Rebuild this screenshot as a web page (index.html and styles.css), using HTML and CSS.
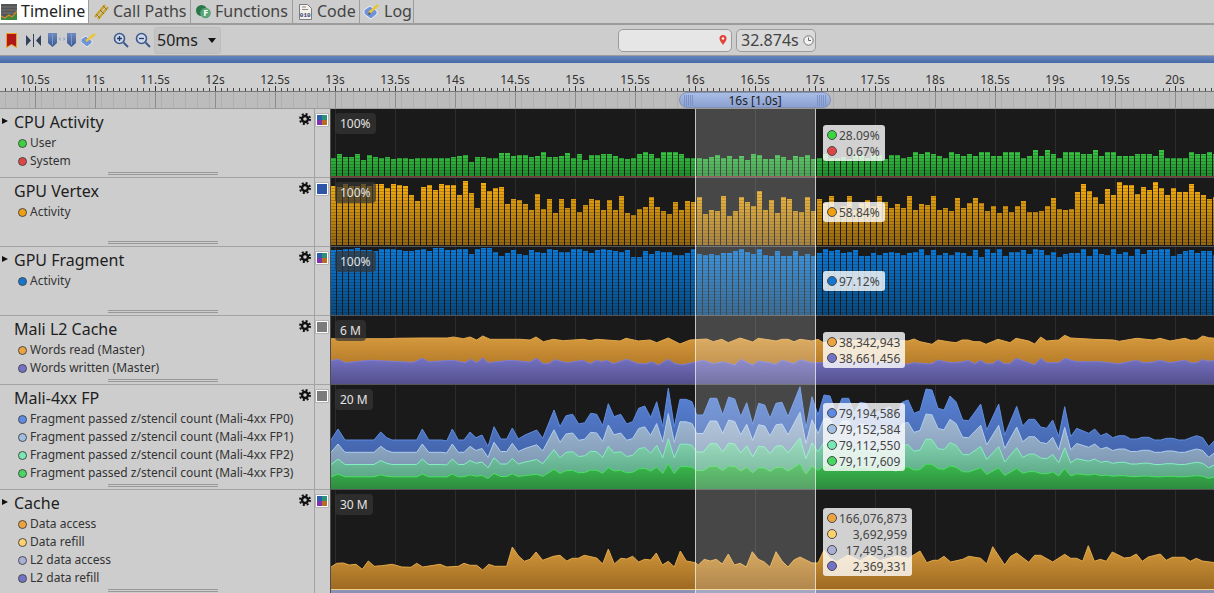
FILE: index.html
```html
<!DOCTYPE html>
<html lang="en">
<head>
<meta charset="utf-8">
<title>Timeline</title>
<link rel="stylesheet" href="styles.css">
</head>
<body>
<svg class="defs" width="0" height="0" aria-hidden="true">
  <symbol id="gear" viewBox="0 0 12 12">
    <circle cx="6" cy="6" r="3" fill="none" stroke="#111" stroke-width="2.4"/>
    <circle cx="6" cy="6" r="5" fill="none" stroke="#111" stroke-width="2" stroke-dasharray="2 1.93"/>
  </symbol>
  <linearGradient id="shield" x1="0" y1="0" x2="0" y2="1"><stop offset="0" stop-color="#6f8bc0"/><stop offset="1" stop-color="#38558f"/></linearGradient>
</svg>

<nav class="tabs">
  <div class="tab active">
    <svg class="ico" width="16" height="16" viewBox="0 0 16 16"><rect width="16" height="16" fill="#555"/><path d="M0 3h16M0 6h16M0 9h16" stroke="#777"/><path d="M0 16V11l4 2 4-3 3 2 5-5v9z" fill="#3d8a3a"/><path d="M0 12l4 2 4-3 3 2 5-6" fill="none" stroke="#d9822b" stroke-width="1.3"/></svg>
    <span>Timeline</span>
  </div>
  <div class="tab">
    <svg class="ico" width="17" height="17" viewBox="0 0 17 17"><path d="M2 14L12 2M5 16L15 4" stroke="#c9a22f" stroke-width="2.4" fill="none"/><path d="M3 11l4 4M7 7l4 4M10 3l4 4" stroke="#8f7420" fill="none"/></svg>
    <span>Call Paths</span>
  </div>
  <div class="tab tab-fn">
    <svg class="ico" width="15" height="15" viewBox="0 0 15 15"><circle cx="5.500" cy="6.500" r="5.500" fill="#2a7748"/><circle cx="9.500" cy="9" r="5.300" fill="#5aa377"/><text class="f-letter" x="7.200" y="12.400">F</text></svg>
    <span>Functions</span>
  </div>
  <div class="tab tab-code">
    <svg class="ico" width="15" height="16" viewBox="0 0 15 16"><path d="M1.500.5h8l4 4v11h-12z" fill="#f4f1e6" stroke="#7a7a88"/><path d="M4 3h4M4 5.500h6" stroke="#8d8d99"/><text class="bin" x="1.800" y="13">010</text></svg>
    <span>Code</span>
  </div>
  <div class="tab tab-log">
    <svg class="ico" width="17" height="16" viewBox="0 0 17 16"><path d="M1 6l6-4 7 5v3l-6 5-7-5z" fill="#6f93d6" stroke="#fff" stroke-width=".8"/><path d="M6 9l9-8" stroke="#e9c53a" stroke-width="2.600"/><path d="M5 11l1-3 2 2z" fill="#555"/></svg>
    <span>Log</span>
  </div>
</nav>

<div class="toolbar">
  <div class="tools">
    <svg class="t-book" width="11" height="15" viewBox="0 0 11 15"><path d="M.5.5h10v14l-5-3-5 3z" fill="#b01818" stroke="#f0a020"/></svg>
    <svg class="t-mirror" width="15" height="13" viewBox="0 0 15 13"><path d="M0 1l5 5.500-5 5.500zM15 1l-5 5.500 5 5.500z" fill="#33415e"/><path d="M7.500 0v13" stroke="#33415e"/></svg>
    <svg class="t-shields" width="28" height="14" viewBox="0 0 28 14"><path d="M0 0h9v10l-4.500 4-4.500-4zM19 0h9v10l-4.500 4-4.500-4z" fill="url(#shield)"/><path d="M4.500 1v11M23.500 1v11" stroke="#8ea4d0" stroke-width=".8"/><path d="M10.500 6l2-2v4zM17.500 6l-2-2v4z" fill="#8ea4c8"/></svg>
    <svg class="t-brush" width="16" height="15" viewBox="0 0 16 15"><path d="M0 6l5-3 6 5v2l-5 4-6-5z" fill="#6f93d6" stroke="#fff" stroke-width=".7"/><path d="M5 8l9-7" stroke="#e9c53a" stroke-width="2.400"/></svg>
    <svg class="t-zoom-in" width="16" height="16" viewBox="0 0 16 16"><circle cx="6.500" cy="6.500" r="5" fill="#cfd8e8" stroke="#3c5a8c" stroke-width="1.600"/><path d="M10.500 10.500l4.500 4.500" stroke="#3c5a8c" stroke-width="2"/><path d="M4 6.500h5M6.500 4v5" stroke="#223a66" stroke-width="1.300"/></svg>
    <svg class="t-zoom-out" width="16" height="16" viewBox="0 0 16 16"><circle cx="6.500" cy="6.500" r="5" fill="#cfd8e8" stroke="#3c5a8c" stroke-width="1.600"/><path d="M10.500 10.500l4.500 4.500" stroke="#3c5a8c" stroke-width="2"/><path d="M4 6.500h5" stroke="#223a66" stroke-width="1.300"/></svg>
    <div class="combo"><span>50ms</span><i class="combo-arrow"></i></div>
  </div>
  <div class="field search">
    <svg width="8" height="10" viewBox="0 0 8 10"><path d="M4 10C2 7 .5 5.500.5 3.500a3.500 3.500 0 0 1 7 0C7.500 5.500 6 7 4 10z" fill="#e0453a"/><circle cx="4" cy="3.500" r="1.200" fill="#fff"/></svg>
  </div>
  <div class="field clock">
    <span>32.874s</span>
    <svg width="11" height="11" viewBox="0 0 11 11"><circle cx="5.500" cy="5.500" r="4.700" fill="#f2f2f2" stroke="#777"/><path d="M5.500 2.500v3h2.500" fill="none" stroke="#666"/></svg>
  </div>
</div>

<div class="strip"></div>

<div class="ruler">
  <div class="labels">
    <span>10.5s</span><span>11s</span><span>11.5s</span><span>12s</span><span>12.5s</span><span>13s</span><span>13.5s</span><span>14s</span><span>14.5s</span><span>15s</span><span>15.5s</span><span>16s</span><span>16.5s</span><span>17s</span><span>17.5s</span><span>18s</span><span>18.5s</span><span>19s</span><span>19.5s</span><span>20s</span>
  </div>
  <div class="ticks"></div>
  <div class="band"><div class="pill">16s [1.0s]</div></div>
</div>

<main class="tracks">
  <section class="row">
    <div class="info">
      <div class="head"><i class="arrow"></i><h2>CPU Activity</h2><svg class="gear" width="12" height="12"><use href="#gear"/></svg></div>
      <ul class="legend"><li><i class="dot c-green"></i>User</li><li><i class="dot c-red"></i>System</li></ul>
      <div class="grip"></div>
    </div>
    <div class="ctl"><i class="swatch multi"></i></div>
    <div class="plot" data-chart="cpu">
      <div class="scale">100%</div>
      <div class="tip tip-16"><i class="dot c-green"></i><span>28.09%</span><i class="dot c-red"></i><span>0.67%</span></div>
    </div>
  </section>

  <section class="row">
    <div class="info">
      <div class="head no-arrow"><h2>GPU Vertex</h2><svg class="gear" width="12" height="12"><use href="#gear"/></svg></div>
      <ul class="legend"><li><i class="dot c-amber"></i>Activity</li></ul>
      <div class="grip"></div>
    </div>
    <div class="ctl"><i class="swatch blue"></i></div>
    <div class="plot" data-chart="vertex">
      <div class="scale">100%</div>
      <div class="tip tip-24"><i class="dot c-amber"></i><span>58.84%</span></div>
    </div>
  </section>

  <section class="row">
    <div class="info">
      <div class="head"><i class="arrow"></i><h2>GPU Fragment</h2><svg class="gear" width="12" height="12"><use href="#gear"/></svg></div>
      <ul class="legend"><li><i class="dot c-blue"></i>Activity</li></ul>
      <div class="grip"></div>
    </div>
    <div class="ctl"><i class="swatch multi"></i></div>
    <div class="plot" data-chart="fragment">
      <div class="scale">100%</div>
      <div class="tip tip-24"><i class="dot c-blue"></i><span>97.12%</span></div>
    </div>
  </section>

  <section class="row">
    <div class="info">
      <div class="head no-arrow"><h2>Mali L2 Cache</h2><svg class="gear" width="12" height="12"><use href="#gear"/></svg></div>
      <ul class="legend"><li><i class="dot c-orange"></i>Words read (Master)</li><li><i class="dot c-violet"></i>Words written (Master)</li></ul>
      <div class="grip"></div>
    </div>
    <div class="ctl"><i class="swatch grey"></i></div>
    <div class="plot" data-chart="l2">
      <div class="scale">6 M</div>
      <div class="tip tip-16"><i class="dot c-orange"></i><span>38,342,943</span><i class="dot c-violet"></i><span>38,661,456</span></div>
    </div>
  </section>

  <section class="row tall">
    <div class="info">
      <div class="head no-arrow"><h2>Mali-4xx FP</h2><svg class="gear" width="12" height="12"><use href="#gear"/></svg></div>
      <ul class="legend">
        <li><i class="dot c-fp0"></i>Fragment passed z/stencil count (Mali-4xx FP0)</li>
        <li><i class="dot c-fp1"></i>Fragment passed z/stencil count (Mali-4xx FP1)</li>
        <li><i class="dot c-fp2"></i>Fragment passed z/stencil count (Mali-4xx FP2)</li>
        <li><i class="dot c-fp3"></i>Fragment passed z/stencil count (Mali-4xx FP3)</li>
      </ul>
      <div class="grip"></div>
    </div>
    <div class="ctl"><i class="swatch grey"></i></div>
    <div class="plot" data-chart="fp">
      <div class="scale">20 M</div>
      <div class="tip tip-18">
        <i class="dot c-fp0"></i><span>79,194,586</span><i class="dot c-fp1"></i><span>79,152,584</span>
        <i class="dot c-fp2"></i><span>79,112,550</span><i class="dot c-fp3"></i><span>79,117,609</span>
      </div>
    </div>
  </section>

  <section class="row tall">
    <div class="info">
      <div class="head"><i class="arrow"></i><h2>Cache</h2><svg class="gear" width="12" height="12"><use href="#gear"/></svg></div>
      <ul class="legend">
        <li><i class="dot c-orange"></i>Data access</li>
        <li><i class="dot c-yellow"></i>Data refill</li>
        <li><i class="dot c-lav"></i>L2 data access</li>
        <li><i class="dot c-violet"></i>L2 data refill</li>
      </ul>
      <div class="grip"></div>
    </div>
    <div class="ctl"><i class="swatch multi"></i></div>
    <div class="plot" data-chart="cache">
      <div class="scale">30 M</div>
      <div class="tip tip-18">
        <i class="dot c-orange"></i><span>166,076,873</span><i class="dot c-yellow"></i><span>3,692,959</span>
        <i class="dot c-lav"></i><span>17,495,318</span><i class="dot c-violet"></i><span>2,369,331</span>
      </div>
    </div>
  </section>

  <div class="selection"></div>
</main>
<script src="charts.js"></script>
</body>
</html>
```
FILE: styles.css
```css
* { box-sizing: border-box; }
html, body { margin: 0; height: 593px; overflow: hidden; }
body { background: #cdcdcd; font-family: "Noto Sans", sans-serif; color: #2a2a2a; width: 1214px; }
.defs { position: absolute; }

.tabs { display: flex; height: 25px; border-bottom: 2px solid #9c9c9c; font-size: 16px; line-height: 23px; color: #444; }
.tab { display: flex; align-items: center; gap: 3px; padding: 0 3px 0 4px; width: 102px; border-right: 1px solid #9c9c9c; }
.tab .ico { flex: none; }
.tab.active { width: 89px; background: #fff; color: #222; padding-left: 1px; gap: 4px; }
.tab-fn { padding-left: 5px; gap: 4px; }
.tab-code { width: 67px; padding-left: 5px; gap: 4px; }
.tab-log { width: 54px; padding-left: 3px; gap: 4px; }
.f-letter { font-size: 9px; font-weight: 700; fill: #fff; font-family: "Noto Sans", sans-serif; }
.bin { font-size: 6px; fill: #22407a; font-family: "Liberation Mono", monospace; font-weight: 700; }

.toolbar { display: flex; align-items: center; height: 31px; border-bottom: 1px solid #9c9c9c; }
.tools { display: flex; align-items: center; width: 618px; flex: none; padding-left: 6px; }
.t-mirror { margin-left: 9px; }
.t-shields { margin-left: 7px; }
.t-brush { margin-left: 5px; }
.t-zoom-in { margin-left: 16px; }
.t-zoom-out { margin-left: 6px; }
.combo { display: flex; align-items: center; justify-content: space-between; width: 67px; height: 27px; margin-left: 3px; padding: 0 2px; background: #c4c4c4; border: 1px solid #bdbdbd; border-radius: 3px; font-size: 16px; color: #222; }
.combo-arrow { width: 0; height: 0; border: 4.500px solid transparent; border-top: 5px solid #111; border-bottom: 0; margin-right: 2px; }
.field { display: flex; align-items: center; height: 23px; background: #e6e6e6; border: 1px solid #9b9b9b; border-radius: 5px; font-size: 16px; color: #444; }
.search { width: 114px; justify-content: flex-end; padding-right: 4px; }
.clock { width: 80px; margin-left: 4px; padding-left: 4px; gap: 4px; background: #dadada; }

.strip { height: 7px; background: linear-gradient(#6685bd, #466aa6); }

.ruler { height: 46px; border-bottom: 1px solid #9c9c9c; background: #cfcfcf; }
.labels { display: flex; height: 23px; padding: 8px 0 0 5px; font-size: 12px; line-height: 17px; color: #333; }
.labels span { flex: none; width: 60px; text-align: center; }
.ticks { height: 6px; border-bottom: 1px solid #777;
  background:
    linear-gradient(90deg, #333 1px, transparent 1px) 35px 0 / 60px 100% repeat-x,
    linear-gradient(90deg, #444 1px, transparent 1px) 5px 100% / 6px 3px repeat-x; }
.band { position: relative; height: 16px;
  background:
    linear-gradient(90deg, #8c8c8c 1px, transparent 1px) 35px 0 / 60px 100% repeat-x,
    linear-gradient(90deg, #b0b0b0 1px, transparent 1px) 5px 0 / 12px 100% repeat-x,
    #bcbcbc; }
.pill { position: absolute; left: 679px; top: 0; width: 152px; height: 16px; border-radius: 8px; border: 1px solid #8291b5; font-size: 12px; line-height: 15px; text-align: center; color: #222;
  background:
    repeating-linear-gradient(90deg, #7c92c4 0 1px, transparent 1px 2px) 4px 2px / 9px 11px no-repeat,
    repeating-linear-gradient(90deg, #7c92c4 0 1px, transparent 1px 2px) 137px 2px / 9px 11px no-repeat,
    linear-gradient(#a9bde6, #8aa0d0); }

.tracks { position: relative; }
.row { display: flex; height: 69px; }
.row.tall { height: 105px; }
.info { display: flex; flex-direction: column; width: 315px; flex: none; padding: 3px 3px 2px 0; border-right: 1px solid #a3a3a3; border-bottom: 1px solid #a3a3a3; }
.head { display: flex; align-items: flex-start; height: 20px; }
.head.no-arrow { padding-left: 14px; }
.arrow { flex: none; width: 14px; height: 20px; position: relative; }
.arrow::before { content: ""; position: absolute; left: 2px; top: 6px; border-left: 6px solid #111; border-top: 3.500px solid transparent; border-bottom: 3.500px solid transparent; }
h2 { flex: 1; margin: 0; font-size: 16px; font-weight: 400; line-height: 20px; color: #1e1e1e; }
.gear { flex: none; margin-top: 1px; }
.legend { list-style: none; margin: 2px 0 0; padding: 0 0 0 18px; font-size: 12px; line-height: 18px; color: #333; }
.legend li { display: flex; align-items: center; gap: 3px; white-space: nowrap; height: 18px; }
.dot { flex: none; width: 9px; height: 9px; border-radius: 50%; border: 1px solid #4a4a4a; }
.grip { flex: none; width: 110px; height: 3px; margin: auto 0 0 108px; border-top: 1px solid #999; border-bottom: 1px solid #999; }

.ctl { flex: none; width: 15px; padding: 5px 0 0 1px; border-bottom: 1px solid #a3a3a3; }
.swatch { display: block; width: 12px; height: 12px; border: 1px solid #fff; box-shadow: 0 0 0 .5px #999; }
.swatch.blue { background: #2d55a8; }
.swatch.grey { background: #7b7b7b; }
.swatch.multi { background:
  linear-gradient(#2a5ea8, #2a5ea8) 0 0 / 50% 50% no-repeat,
  linear-gradient(#2a9078, #2a9078) 100% 0 / 50% 50% no-repeat,
  linear-gradient(#8030b0, #8030b0) 0 100% / 50% 50% no-repeat,
  linear-gradient(#b86c20, #b86c20) 100% 100% / 50% 50% no-repeat; }

.plot { position: relative; flex: 1; overflow: hidden; border-left: 1px solid #4e4e4e; border-bottom: 1px solid #555; background: #1a1a1a; }
.plot svg { display: block; }
.scale { position: absolute; left: 4px; top: 4px; height: 21px; padding: 0 5px; border-radius: 4px; background: rgba(52, 52, 52, .72); font-size: 12px; line-height: 21px; color: #e4e4e4; }
.tip { position: absolute; left: 492px; display: grid; grid-template-columns: 10px auto; column-gap: 2px; align-items: center; padding: 2px 5px 2px 4px; border-radius: 3px; background: rgba(255, 255, 255, .8); font-size: 12px; line-height: 16px; color: #444; text-align: right; }
.tip span { position: relative; top: 1px; }
.tip .dot { width: 10px; height: 10px; }
.tip-16 { top: 16px; }
.tip-18 { top: 18px; }
.tip-24 { top: 24px; }

.selection { position: absolute; left: 695px; top: 0; width: 121px; height: 484px; border-left: 1px solid rgba(255, 255, 255, .65); border-right: 1px solid rgba(255, 255, 255, .65); background: rgba(255, 255, 255, .2); }

.c-green { background: #3bd43f; }
.c-red { background: #e04545; }
.c-amber { background: #eea010; }
.c-blue { background: #1576d0; }
.c-orange { background: #eda33e; }
.c-violet { background: #7272c8; }
.c-yellow { background: #fdd26e; }
.c-lav { background: #aab0d8; }
.c-fp0 { background: #5c8ae6; }
.c-fp1 { background: #a0bfe0; }
.c-fp2 { background: #78e8b4; }
.c-fp3 { background: #46d860; }
```
FILE: charts.js
```js
(function () {
  var NS = 'http://www.w3.org/2000/svg';
  var W = 883;

  function el(name, attrs, parent) {
    var n = document.createElementNS(NS, name);
    Object.keys(attrs).forEach(function (k) { n.setAttribute(k, attrs[k]); });
    if (parent) parent.appendChild(n);
    return n;
  }

  // Repeatable pseudo-random values so that every render is the same.
  function noise(seed) {
    var s = seed;
    return function () { s = (s * 16807) % 2147483647; return s / 2147483647; };
  }

  // Bar tops as read from the reference at 3x, with their 3x baselines.
  var cpuA = [25,12,21,21,12,30,15,21,24,21,27,24,24,27,24,24,24,24,24,24,21,18,15,36,21,21,24,24,9,9,18,15,15,21,18,6,21,21,18,9,24,12,30,15,15,12,12,18,24,27];
  var cpuB = [138,150,150,151,153,147,141,150,144,153,144,156,138,141,153,153,141,147,156,144,147,141,153,150,138,150,150,147,153,138,141,150,141,141,153,141,141,150,147];
  var vtxA = [111,115,105,111,111,105,111,105,105,117,105,108,111,138,156,114,108,123,105,108,108,138,96,132,177,102,126,117,114,165,150,153,165,183,135,180,150,192,150,177,150,189,168,150,153,183,153,183,141,192];
  var vtxB = [310,283,286,271,321,310,313,268,328,313,271,286,298,253,310,280,319,271,277,313,316,271,313,277,289,268,310,298,268,310,289,280,298,268,286,303,292,303,268,310,292,295,268];
  var frgA = [300,300,296,296,294,300,300,303,297,297,297,300,303,303,300,297,303,294,294,300,300,297,297,312,297,294,294,306,318,309,300,312,315,300,306,309,297,300,306,306,297,297,303,309,300,297,300,303,306,300];

  function heights(count, a, aBase, b, bBase, rest) {
    var out = [];
    for (var i = 0; i < count; i++) {
      if (i < a.length) out.push((aBase - a[i]) / 3);
      else if (b && i >= 58 && i - 58 < b.length) out.push((bBase - b[i - 58]) / 3);
      else out.push(rest(i));
    }
    return out;
  }

  var r1 = noise(4711), r2 = noise(1234), r3 = noise(99);
  var barCharts = {
    cpu: {
      base: 67, span: 24, top: '#38c442', bottom: '#1f8f2e',
      bars: heights(148, cpuA, 78, cpuB, 205, function () { return 18 + Math.floor(r1() * 4) * 2 + (r1() > .8 ? 2 : 0); })
    },
    vertex: {
      base: 67, span: 60, top: '#f4ac10', bottom: '#936610',
      bars: heights(148, vtxA, 288, vtxB, 415, function (i) {
        return i > 123 ? 40 + r2() * 24 : 30 + r2() * 18;
      })
    },
    fragment: {
      base: 68, span: 66, top: '#0c7ad8', bottom: '#084a80',
      bars: heights(148, frgA, 495, null, 0, function () { return 58 + r3() * 8; })
    }
  };

  function gradient(defs, id, y1, y2, from, to) {
    var g = el('linearGradient', { id: id, gradientUnits: 'userSpaceOnUse', x1: 0, x2: 0, y1: y1, y2: y2 }, defs);
    el('stop', { offset: 0, 'stop-color': from }, g);
    el('stop', { offset: 1, 'stop-color': to }, g);
    return 'url(#' + id + ')';
  }

  function canvas(plot, h) {
    var svg = el('svg', { width: W, height: h, viewBox: '0 0 ' + W + ' ' + h });
    plot.insertBefore(svg, plot.firstChild);
    var grid = '';
    for (var x = 4.5; x < W; x += 60) grid += 'M' + x + ' 0V' + h;
    el('path', { d: grid, stroke: '#2c2c2c', fill: 'none' }, svg);
    return svg;
  }

  function drawBars(plot, name, c) {
    var svg = canvas(plot, 68);
    var defs = el('defs', {}, svg);
    var fill = gradient(defs, 'bar-' + name, c.base - c.span, c.base, c.top, c.bottom);
    var p = el('pattern', { id: 'stripe-' + name, width: 6, height: 3, patternUnits: 'userSpaceOnUse', y: c.base % 3 }, defs);
    el('rect', { x: 0, y: 0, width: 6, height: 1, fill: 'rgba(0,0,0,.2)' }, p);
    var d = '';
    c.bars.forEach(function (v, i) {
      var t = Math.round(v);
      d += 'M' + (i * 6) + ' ' + (c.base - t) + 'h5v' + t + 'h-5z';
    });
    el('path', { d: d, fill: fill }, svg);
    el('path', { d: d, fill: 'url(#stripe-' + name + ')' }, svg);
    if (name === 'cpu') el('rect', { x: 0, y: 67, width: W, height: 1, fill: '#7d3a34' }, svg);
  }

  // Outlines traced at 3x from the reference; x runs on from 1320 in the right half.
  function trace(list) {
    var pts = [];
    for (var i = 0; i < list.length; i += 2) pts.push([list[i] / 3 - 1, list[i + 1] / 3]);
    return pts;
  }

  function area(svg, pts, base, fill, line) {
    var s = pts.map(function (p) { return p[0].toFixed(1) + ' ' + p[1].toFixed(1); }).join('L');
    var last = pts[pts.length - 1][0].toFixed(1), first = pts[0][0].toFixed(1);
    el('path', { d: 'M' + first + ' ' + base + 'L' + s + 'L' + last + ' ' + base + 'z', fill: fill }, svg);
    el('path', { d: 'M' + s, fill: 'none', stroke: line, 'stroke-width': 1 }, svg);
  }

  var l2Top = trace([-3,68,180,68,200,67,270,66,352,66,370,63,400,68,420,63,440,72,458,60,480,70,570,70,600,72,618,63,640,77,670,70,700,74,760,70,780,74,800,70,870,75,888,67,925,75,960,72,980,80,1015,66,1050,84,1080,72,1130,69,1150,77,1175,70,1195,80,1230,66,1268,78,1285,67,1320,72,1338,75,1356,70,1374,70,1392,77,1410,70,1446,75,1464,70,1480,80,1520,72,1600,74,1680,72,1734,75,1752,69,1770,77,1806,85,1824,72,1860,78,1878,80,1896,72,1914,72,1932,77,1950,77,1968,85,2004,70,2040,80,2058,67,2096,75,2114,84,2132,63,2150,75,2186,72,2204,58,2222,66,2290,70,2350,72,2368,76,2420,67,2470,72,2490,67,2520,75,2565,67,2582,73,2600,72,2618,60,2636,65,2655,67]);
  var l2Low = trace([-3,135,25,130,45,140,120,133,250,139,277,127,295,137,370,133,405,140,422,130,440,140,458,126,475,140,540,133,600,138,620,127,640,143,655,143,675,131,710,140,760,133,780,143,800,133,815,137,830,133,850,143,890,130,925,143,950,143,965,137,985,147,1015,130,1035,143,1060,146,1120,133,1150,143,1180,137,1215,147,1232,130,1268,147,1285,135,1320,140,1338,145,1356,132,1392,143,1410,131,1446,140,1480,140,1520,135,1600,140,1680,138,1730,145,1752,140,1788,143,1806,143,1824,132,1860,140,1896,138,1914,133,1934,143,1952,133,1968,143,1988,143,2004,131,2022,143,2040,143,2058,127,2096,140,2114,146,2132,127,2150,140,2186,140,2204,127,2240,137,2310,137,2366,143,2420,133,2440,140,2470,138,2490,133,2520,140,2565,133,2582,140,2600,140,2618,131,2636,136,2655,133]);

  var fpTop = trace([-3,168,3,165,24,132,45,165,132,165,152,141,170,158,186,165,260,165,277,132,296,165,335,165,350,168,367,132,385,165,402,165,420,141,438,158,456,150,474,185,492,125,512,162,530,162,547,129,565,162,585,150,620,135,638,160,672,75,690,125,708,92,728,88,746,117,764,113,782,85,800,88,818,122,835,56,852,95,872,88,890,117,908,110,926,70,944,63,962,97,980,50,998,125,1015,10,1033,125,1050,43,1068,43,1086,50,1100,90,1120,90,1140,40,1160,40,1178,90,1196,36,1214,42,1232,95,1250,53,1268,118,1286,55,1304,60,1320,100,1338,55,1356,52,1374,95,1410,5,1428,130,1446,35,1464,90,1482,30,1500,33,1518,85,1536,40,1556,40,1572,85,1590,52,1608,55,1626,90,1644,80,1680,65,1698,100,1716,52,1734,45,1752,85,1770,78,1788,12,1806,15,1824,70,1842,75,1860,33,1878,50,1898,105,1916,107,1952,57,1970,135,2006,57,2024,150,2060,64,2078,123,2096,103,2114,103,2132,126,2150,130,2168,105,2186,155,2204,65,2222,155,2240,130,2276,145,2294,132,2312,152,2330,145,2348,158,2366,152,2384,152,2402,162,2420,162,2438,157,2456,157,2474,165,2492,165,2510,160,2528,160,2546,165,2564,165,2582,158,2600,152,2618,158,2636,185,2655,165]);

  var cacheTop = trace([-3,231,3,231,20,220,40,219,58,225,78,223,97,238,115,213,133,229,155,227,187,223,215,231,243,232,260,220,278,231,330,223,350,231,385,229,402,220,420,226,440,226,458,240,476,223,494,229,530,229,547,171,565,197,583,214,600,208,618,186,638,211,670,199,690,196,710,213,727,205,745,205,763,196,800,204,818,222,835,177,853,222,872,205,890,207,908,199,926,216,944,208,962,210,979,189,997,225,1015,214,1033,231,1051,183,1069,213,1096,218,1105,225,1123,208,1141,213,1159,208,1177,222,1195,192,1213,225,1231,220,1249,231,1267,185,1285,208,1303,216,1320,232,1338,185,1356,213,1374,231,1392,210,1410,201,1446,219,1464,219,1482,180,1500,205,1520,215,1555,195,1590,212,1620,195,1650,212,1700,198,1735,205,1770,183,1790,218,1810,211,1824,211,1842,199,1862,216,1898,208,1916,199,1952,205,1970,222,1988,170,2024,225,2042,199,2060,189,2096,217,2114,196,2132,196,2168,216,2204,193,2222,205,2240,205,2258,214,2275,167,2293,214,2311,208,2329,214,2347,186,2383,204,2401,202,2419,192,2437,214,2455,201,2491,192,2509,211,2527,202,2563,202,2581,214,2599,205,2617,213,2655,218]);

  function scaled(pts, base, k) {
    return pts.map(function (p) { return [p[0], base - (base - p[1]) * k]; });
  }

  function drawL2(plot) {
    var svg = canvas(plot, 68);
    var defs = el('defs', {}, svg);
    area(svg, l2Top, 68, gradient(defs, 'l2a', 20, 48, '#d69a3e', '#b67c28'), '#e2a64a');
    area(svg, l2Low, 68, gradient(defs, 'l2b', 42, 68, '#7472c2', '#544f8c'), '#7f7dd2');
  }

  function drawFp(plot) {
    var svg = canvas(plot, 104);
    var defs = el('defs', {}, svg);
    var base = 104;
    area(svg, scaled(fpTop, base, 1), base, gradient(defs, 'fp0', 0, 70, '#5a86d8', '#4464ac'), '#5f8ce0');
    area(svg, scaled(fpTop, base, .75), base, gradient(defs, 'fp1', 25, 80, '#a6bcd6', '#7f99b4'), '#aecdee');
    area(svg, scaled(fpTop, base, .5), base, gradient(defs, 'fp2', 50, 90, '#88d8b2', '#5eaa8a'), '#84eec0');
    area(svg, scaled(fpTop, base, .25), base, gradient(defs, 'fp3', 75, 104, '#3cc04e', '#2e8c40'), '#4ae062');
  }

  function drawCache(plot) {
    var svg = canvas(plot, 103);
    var defs = el('defs', {}, svg);
    area(svg, cacheTop, 99, gradient(defs, 'cachea', 55, 99, '#d59a3c', '#9e6a22'), '#e2a848');
    el('rect', { x: 0, y: 99, width: W, height: 1, fill: '#f3cf82' }, svg);
    el('rect', { x: 0, y: 100, width: W, height: 3, fill: '#8b92b6' }, svg);
  }

  document.querySelectorAll('.plot').forEach(function (plot) {
    var name = plot.getAttribute('data-chart');
    if (barCharts[name]) drawBars(plot, name, barCharts[name]);
    else if (name === 'l2') drawL2(plot);
    else if (name === 'fp') drawFp(plot);
    else if (name === 'cache') drawCache(plot);
  });
})();
```
